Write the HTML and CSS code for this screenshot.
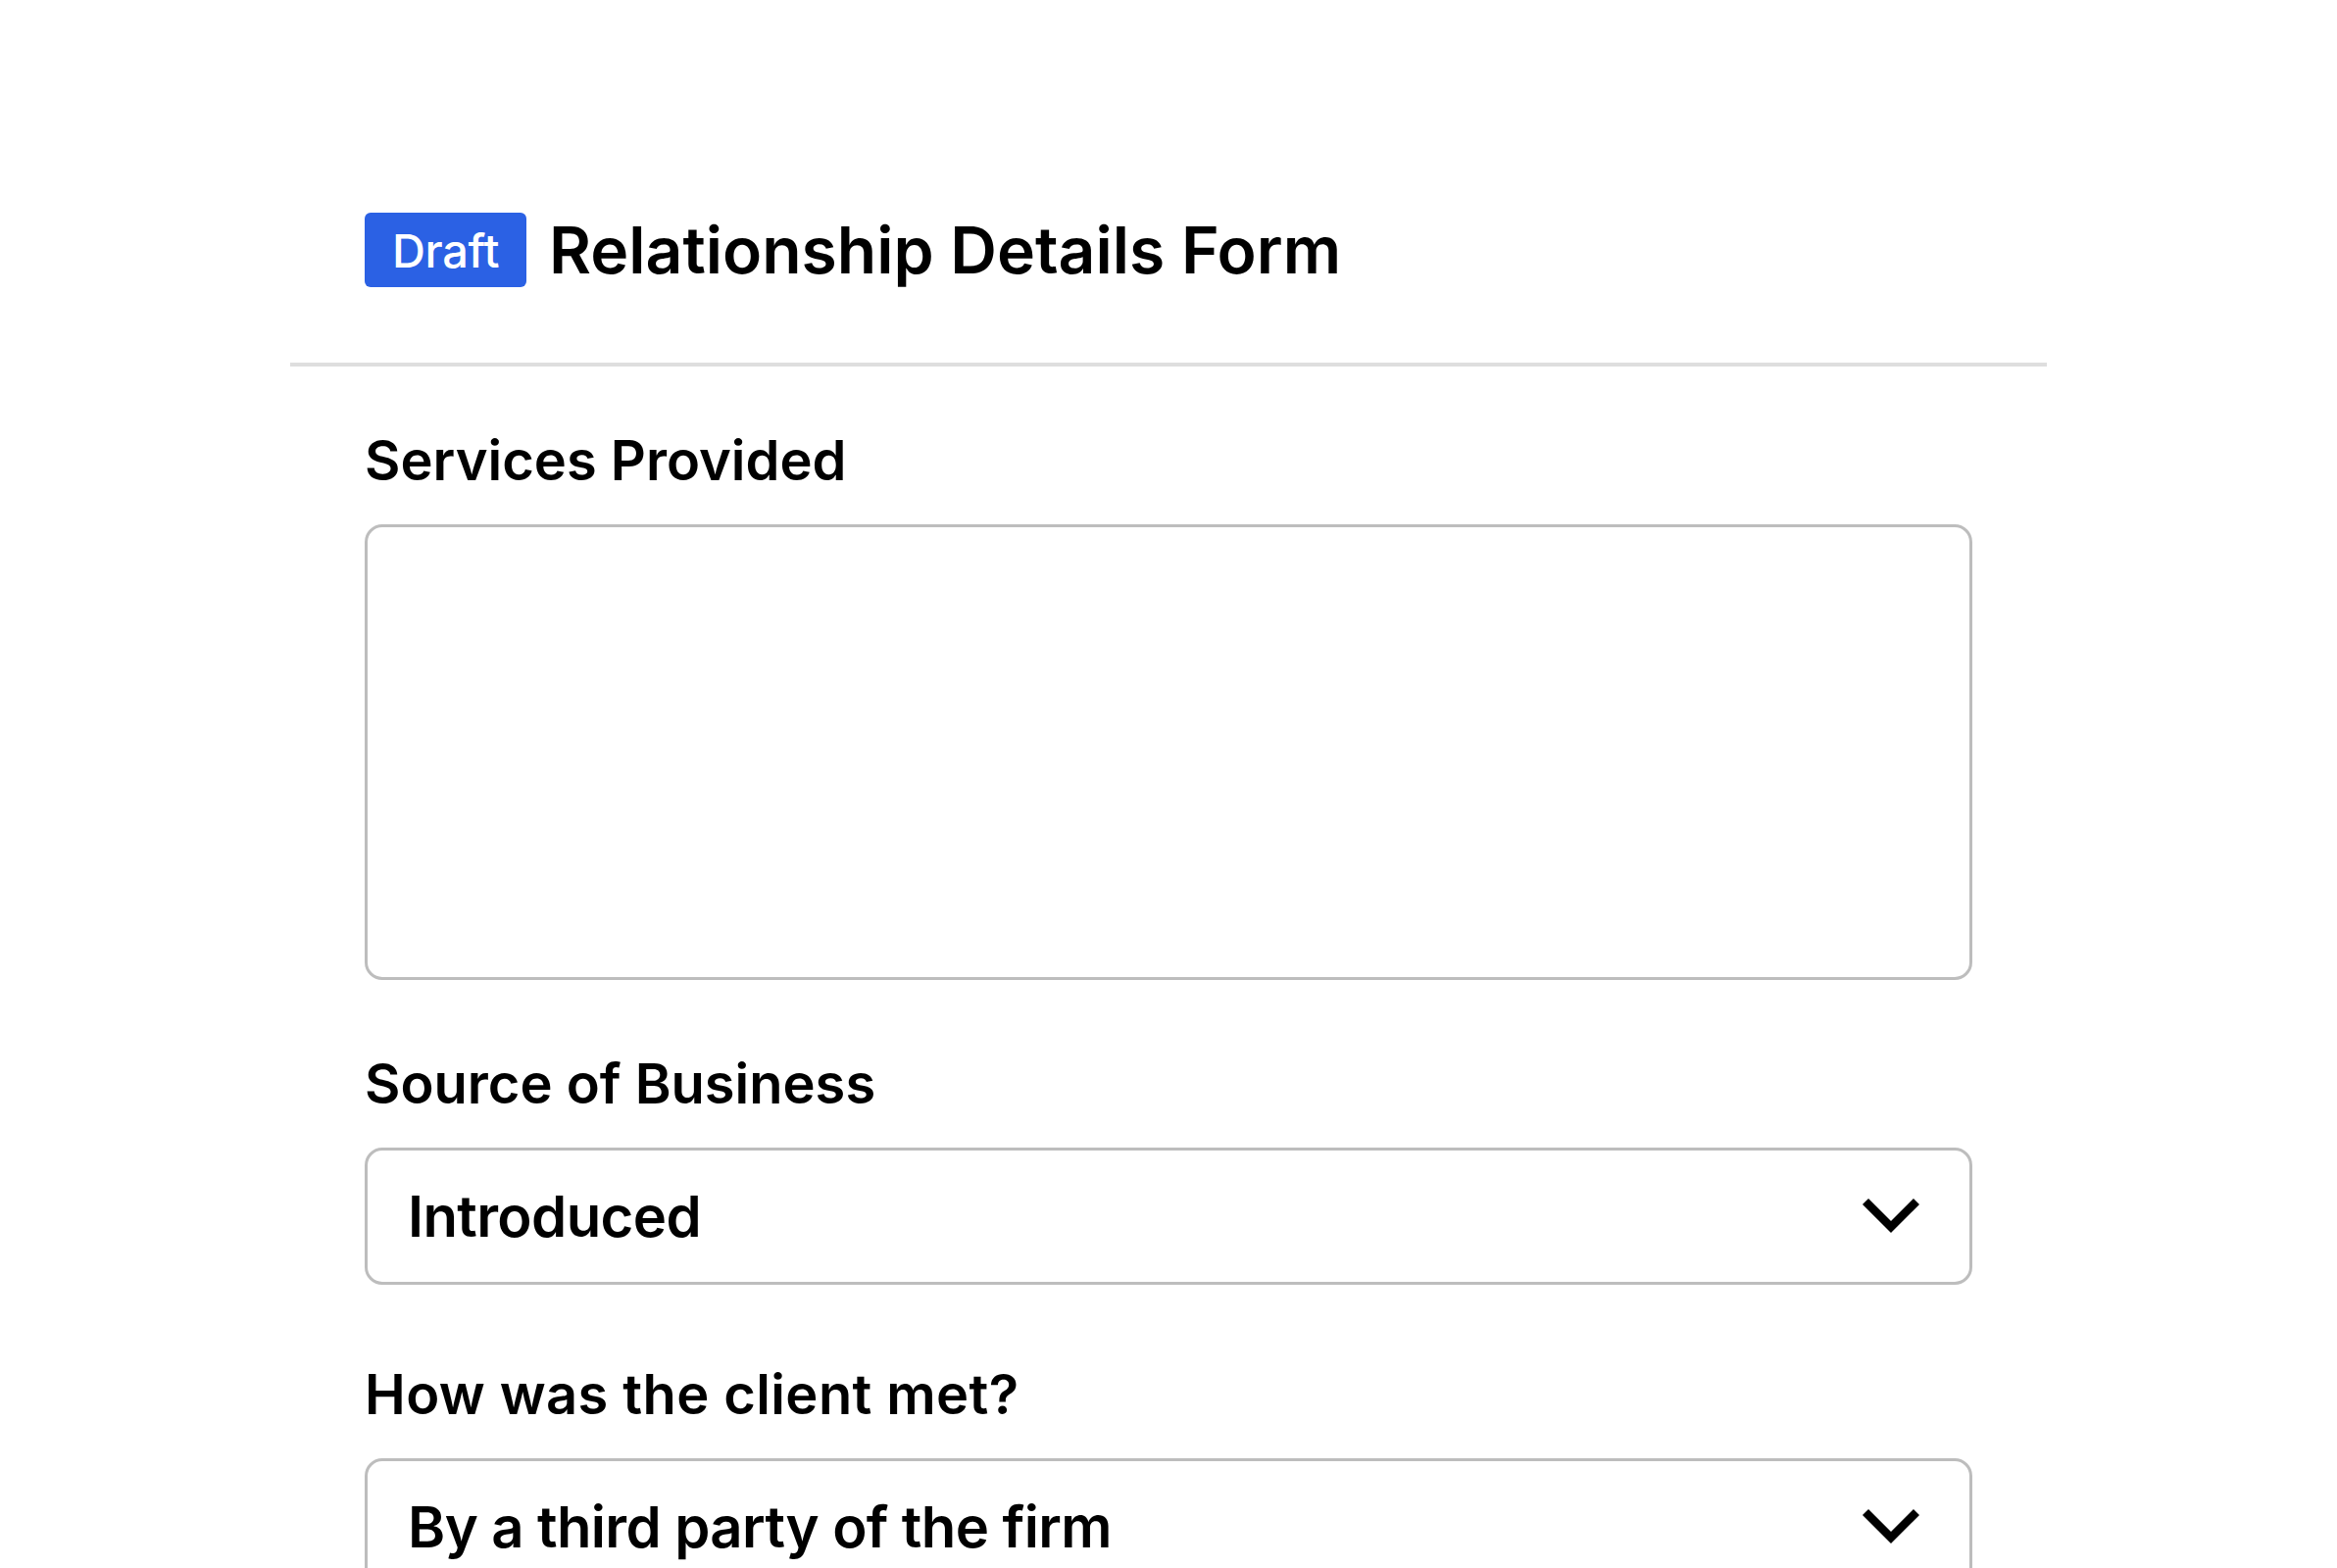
FILE: index.html
```html
<!DOCTYPE html>
<html lang="en">
<head>
<meta charset="utf-8">
<title>Relationship Details Form</title>
<link rel="stylesheet" href="styles.css">
</head>
<body>
<div class="page">
  <header class="header">
    <span class="badge">Draft</span>
    <h1 class="title">Relationship Details Form</h1>
  </header>
  <div class="divider"></div>
  <form class="form">
    <div class="field field-services">
      <label class="label">Services Provided</label>
      <div class="textarea"></div>
    </div>
    <div class="field field-source">
      <label class="label">Source of Business</label>
      <div class="select">
        <span class="select-value">Introduced</span>
        <svg class="chevron" viewBox="0 0 60 38" width="60" height="38"><path d="M4 4 L30 30 L56 4" fill="none" stroke="#000" stroke-width="8.5"/></svg>
      </div>
    </div>
    <div class="field field-met">
      <label class="label">How was the client met?</label>
      <div class="select">
        <span class="select-value">By a third party of the firm</span>
        <svg class="chevron" viewBox="0 0 60 38" width="60" height="38"><path d="M4 4 L30 30 L56 4" fill="none" stroke="#000" stroke-width="8.5"/></svg>
      </div>
    </div>
  </form>
</div>
</body>
</html>
```
FILE: styles.css
```css
* { box-sizing: border-box; }
html, body { margin: 0; padding: 0; background: #fff; }
body {
  font-family: "Inter", "Noto Sans", sans-serif;
  color: #000;
  height: 1600px;
  overflow: hidden;
}
.page {
  width: 1792px;
  margin-left: 296px;
  padding-top: 217px;
}
.header {
  display: flex;
  align-items: center;
  gap: 23px;
  padding: 0 76px;
  height: 76px;
}
.badge {
  display: flex;
  align-items: center;
  justify-content: center;
  width: 165px;
  height: 76px;
  background: #2b61e4;
  color: #fff;
  border-radius: 6px;
  font-size: 47px;
  font-weight: 500;
  letter-spacing: -0.3px;
}
.title {
  margin: 0;
  font-size: 66px;
  font-weight: 600;
  letter-spacing: 0;
  line-height: 76px;
}
.divider {
  margin-top: 77px;
  height: 4px;
  background: #dedede;
}
.form {
  padding: 0 76px;
  display: flex;
  flex-direction: column;
}
.field {
  display: flex;
  flex-direction: column;
}
.label {
  font-size: 56px;
  font-weight: 600;
  letter-spacing: 0;
  line-height: 70px;
  margin-bottom: 0;
}
.field-services .label { margin-top: 61px; }
.field-source .label { margin-top: 71px; }
.field-met .label { margin-top: 77px; }
.field-met .label { letter-spacing: 0.4px; }
.textarea {
  margin-top: 30px;
  height: 465px;
  border: 3px solid #bdbdbd;
  border-radius: 18px;
}
.select {
  margin-top: 30px;
  height: 140px;
  border: 3px solid #bdbdbd;
  border-radius: 18px;
  display: flex;
  align-items: center;
  justify-content: space-between;
  padding: 0 50px 0 41px;
}
.select-value {
  font-size: 58px;
  font-weight: 600;
  letter-spacing: -0.6px;
}
.chevron { display: block; }
```
